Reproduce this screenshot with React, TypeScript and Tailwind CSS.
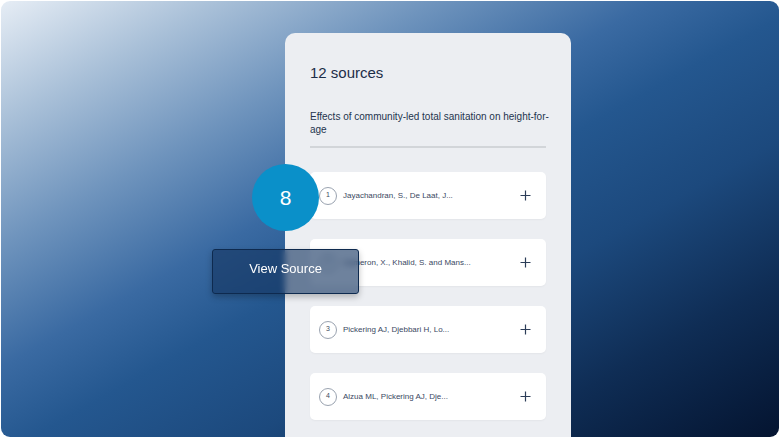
import React from "react";

const items = [
  { n: 1, t: "Jayachandran, S., De Laat, J..." },
  { n: 2, t: "Cameron, X., Khalid, S. and Mans..." },
  { n: 3, t: "Pickering AJ, Djebbari H, Lo..." },
  { n: 4, t: "Alzua ML, Pickering AJ, Dje..." },
];

function Plus() {
  return (
    <svg width="11" height="11" viewBox="0 0 11 11" className="text-[#2c3d58]">
      <path d="M5.5 0.5v10M0.5 5.5h10" stroke="currentColor" strokeWidth="1.2" fill="none" />
    </svg>
  );
}

export default function App() {
  return (
    <div className="w-[780px] h-[439px] bg-white p-px pb-[2px] font-['Liberation_Sans',Arial,sans-serif]">
      <div className="relative w-full h-full rounded-[9px] overflow-hidden bg-[linear-gradient(to_bottom_right,#e6edf5_0%,#a9c0d8_14%,#6f94bd_28%,#3a6aa2_42%,#24578f_52%,#1c497d_66%,#0f2d55_82%,#041430_100%)]">
        <div className="ml-[284px] mt-[32px] w-[286px] h-[420px] rounded-[10px] bg-[#eceef2] px-[25px] pt-[30px]">
          <div className="text-[15px] leading-[20px] text-[#1c2d48]">12 sources</div>
          <div className="mt-[27px] w-[252px] text-[10px] leading-[13px] text-[#24344e]">
            Effects of community-led total sanitation on height-for-age
          </div>
          <div className="mt-[10px] h-[2px] bg-[#d2d5d9]" />
          <div className="mt-[24px] flex flex-col gap-[20px]">
            {items.map((it) => (
              <div
                key={it.n}
                className="h-[47px] rounded-[5px] bg-white flex items-center pl-[9px] pr-[15px] shadow-[0_1px_2px_rgba(0,0,0,0.04)]"
              >
                <div className="w-[18px] h-[18px] rounded-full border border-[#9aa3b0] flex items-center justify-center text-[7px] text-[#3d4b60]">
                  {it.n}
                </div>
                <div className="ml-[6px] flex-1 text-[8px] text-[#3a4862]">{it.t}</div>
                <Plus />
              </div>
            ))}
          </div>
        </div>

        <div className="absolute left-[251px] top-[163px] w-[67px] h-[67px] rounded-full bg-[#0a90c9] flex items-center justify-center text-white text-[21px]">
          8
        </div>

        <div className="absolute left-[211px] top-[248px] w-[147px] h-[45px] pb-[5px] rounded-[3px] border border-[#0e2a4f] bg-[rgba(21,53,97,0.62)] backdrop-blur-[3px] shadow-[0_3px_6px_rgba(0,0,0,0.25)] flex items-center justify-center text-white text-[13px]">
          View Source
        </div>
      </div>
    </div>
  );
}
